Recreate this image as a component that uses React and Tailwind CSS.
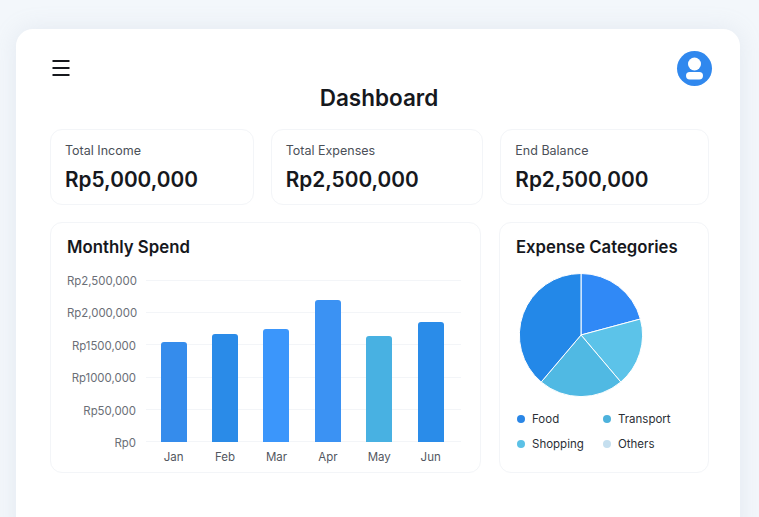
const stats = [
  { label: "Total Income", value: "Rp5,000,000", width: "w-[204px]" },
  { label: "Total Expenses", value: "Rp2,500,000", width: "w-[213px]" },
  { label: "End Balance", value: "Rp2,500,000", width: "w-[209px]" },
];

const yLabels = ["Rp2,500,000", "Rp2,000,000", "Rp1500,000", "Rp1000,000", "Rp50,000", "Rp0"];

const bars = [
  { month: "Jan", height: "h-[100px]", color: "bg-[#358cec]" },
  { month: "Feb", height: "h-[108px]", color: "bg-[#2a8be8]" },
  { month: "Mar", height: "h-[113px]", color: "bg-[#3b96fb]" },
  { month: "Apr", height: "h-[142px]", color: "bg-[#3b92f3]" },
  { month: "May", height: "h-[106px]", color: "bg-[#48b1e2]" },
  { month: "Jun", height: "h-[120px]", color: "bg-[#2a8ce9]" },
];

const legend = [
  { name: "Food", color: "bg-[#2a86e6]" },
  { name: "Transport", color: "bg-[#4db2dc]" },
  { name: "Shopping", color: "bg-[#5bc1e6]" },
  { name: "Others", color: "bg-[#c5dfef]" },
];

function StatCard({ label, value, width }) {
  return (
    <div className={`${width} h-[76px] rounded-xl border border-[#f3f5f8] bg-white pl-[14px] pt-[12px]`}>
      <div className="text-[12.5px] leading-[18px] text-[#4b5058]">{label}</div>
      <div className="mt-[6px] text-[20.8px] leading-[28px] font-semibold text-[#16181d]">{value}</div>
    </div>
  );
}

function BarChart() {
  return (
    <div className="mt-[15px] flex">
      <div className="flex h-[176px] w-[69px] flex-col justify-between text-right text-[11.4px] leading-[14px] text-[#6b6f77]">
        {yLabels.map((y) => (
          <div key={y}>{y}</div>
        ))}
      </div>
      <div className="relative ml-[10px] w-[315px] pt-[6px]">
        <div className="absolute inset-x-0 top-[6px] flex h-[162px] flex-col justify-between">
          {yLabels.map((y) => (
            <div key={y} className="h-px bg-[#f3f5f8]" />
          ))}
        </div>
        <div className="relative flex pl-[2px]">
          {bars.map((b) => (
            <div key={b.month} className="flex w-[51.4px] flex-col items-center">
              <div className="flex h-[162px] items-end">
                <div className={`${b.height} ${b.color} w-[26px] rounded-t-[3px]`} />
              </div>
              <div className="mt-[8px] text-[11.5px] leading-[14px] text-[#53575f]">{b.month}</div>
            </div>
          ))}
        </div>
      </div>
    </div>
  );
}

function PieChart() {
  return (
    <svg width="126" height="126" viewBox="0 0 126 126" className="mt-[13px] ml-[2px]">
      <g stroke="#ffffff" strokeWidth="1" strokeLinejoin="round">
        <path d="M63 63 L63 1.5 A61.5 61.5 0 0 1 122.4 47 Z" fill="#3089f6" />
        <path d="M63 63 L122.4 47 A61.5 61.5 0 0 1 102.8 110 Z" fill="#5cc3e9" />
        <path d="M63 63 L102.8 110 A61.5 61.5 0 0 1 23.2 110 Z" fill="#50b9e3" />
        <path d="M63 63 L23.2 110 A61.5 61.5 0 0 1 63 1.5 Z" fill="#2388e8" />
      </g>
    </svg>
  );
}

export default function App() {
  return (
    <div className="h-[517px] overflow-hidden bg-[#f3f7fb] px-[19px] pt-[29px] font-['Inter',sans-serif]">
      <div className="h-[520px] w-[724px] -ml-[3px] rounded-[17px] bg-white pl-[34px] pr-[31px] pt-[22px] shadow-[0_0_24px_rgba(148,163,184,0.16)]">
        <div className="flex h-[35px] items-center justify-between">
          <svg width="20" height="18" viewBox="0 0 20 18" className="ml-[1px] mt-[-1px]">
            <path d="M1.5 2h17M1.5 9h17M1.5 16h17" stroke="#16181d" strokeWidth="1.8" />
          </svg>
          <div className="-mr-[3px] h-[35px] w-[35px] rounded-full bg-[#3088ee]">
            <svg width="35" height="35" viewBox="0 0 35 35">
              <circle cx="17.5" cy="13" r="6.5" fill="#ffffff" />
              <rect x="9" y="21" width="17" height="7.5" rx="3.7" fill="#ffffff" />
            </svg>
          </div>
        </div>

        <h1 className="mt-[-2px] ml-[-1px] text-center text-[22.5px] leading-[28px] font-semibold text-[#16181d]">Dashboard</h1>

        <div className="mt-[17px] flex gap-[17px]">
          {stats.map((s) => (
            <StatCard key={s.label} {...s} />
          ))}
        </div>

        <div className="mt-[17px] flex gap-[18px]">
          <div className="h-[251px] w-[431px] rounded-xl border border-[#f3f5f8] bg-white pl-[16px] pt-[12px]">
            <h2 className="text-[16.8px] leading-[24px] font-semibold text-[#16181d]">Monthly Spend</h2>
            <BarChart />
          </div>
          <div className="h-[251px] w-[210px] rounded-xl border border-[#f3f5f8] bg-white pl-[16px] pt-[12px]">
            <h2 className="text-[16.7px] leading-[24px] font-semibold text-[#16181d]">Expense Categories</h2>
            <PieChart />
            <div className="mt-[14px] grid grid-cols-[86px_1fr] gap-y-[11px] pl-[1px]">
              {legend.map((l) => (
                <div key={l.name} className="flex items-center gap-[7px] text-[11.5px] leading-[14px] text-[#2b2f36]">
                  <span className={`${l.color} h-[8px] w-[8px] rounded-full`} />
                  {l.name}
                </div>
              ))}
            </div>
          </div>
        </div>
      </div>
    </div>
  );
}
